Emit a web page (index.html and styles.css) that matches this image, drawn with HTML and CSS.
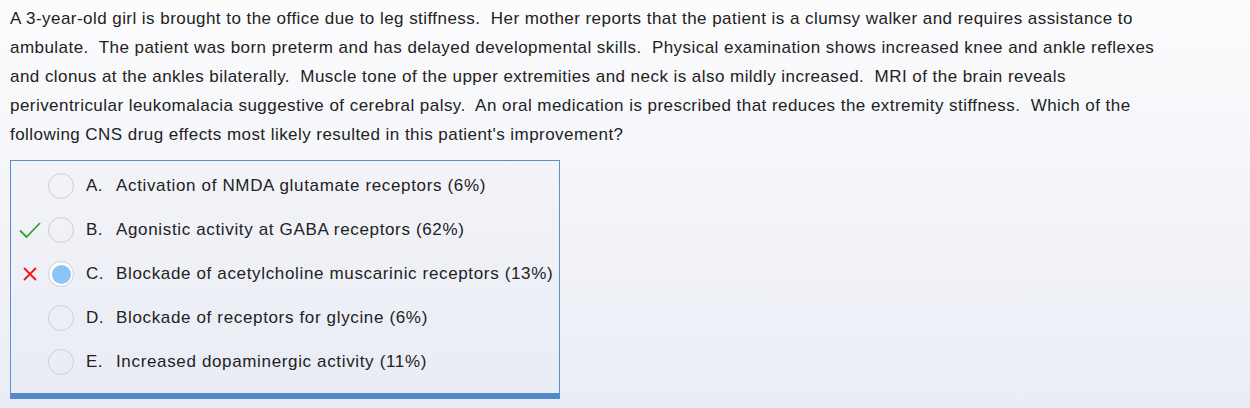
FILE: index.html
```html
<!DOCTYPE html>
<html>
<head>
<meta charset="utf-8">
<link rel="stylesheet" href="styles.css">
</head>
<body>
<div class="page">
  <p class="stem">A 3-year-old girl is brought to the office due to leg stiffness.&nbsp; Her mother reports that the patient is a clumsy walker and requires assistance to ambulate.&nbsp; The patient was born preterm and has delayed developmental skills.&nbsp; Physical examination shows increased knee and ankle reflexes and clonus at the ankles bilaterally.&nbsp; Muscle tone of the upper extremities and neck is also mildly increased.&nbsp; MRI of the brain reveals periventricular leukomalacia suggestive of cerebral palsy.&nbsp; An oral medication is prescribed that reduces the extremity stiffness.&nbsp; Which of the following CNS drug effects most likely resulted in this patient's improvement?</p>
  <div class="choices">
    <div class="choice">
      <span class="mark"></span>
      <span class="radio"></span>
      <span class="letter">A.</span>
      <span class="label">Activation of NMDA glutamate receptors (6%)</span>
    </div>
    <div class="choice">
      <span class="mark"><svg width="24" height="18" viewBox="0 0 24 18"><path d="M2 9.5 L8.5 16 L22 2" fill="none" stroke="#2aa52a" stroke-width="1.8"/></svg></span>
      <span class="radio"></span>
      <span class="letter">B.</span>
      <span class="label">Agonistic activity at GABA receptors (62%)</span>
    </div>
    <div class="choice">
      <span class="mark"><svg width="16" height="16" viewBox="0 0 16 16"><path d="M2 2 L14 14 M14 2 L2 14" fill="none" stroke="#f01414" stroke-width="1.8"/></svg></span>
      <span class="radio selected"></span>
      <span class="letter">C.</span>
      <span class="label">Blockade of acetylcholine muscarinic receptors (13%)</span>
    </div>
    <div class="choice">
      <span class="mark"></span>
      <span class="radio"></span>
      <span class="letter">D.</span>
      <span class="label">Blockade of receptors for glycine (6%)</span>
    </div>
    <div class="choice">
      <span class="mark"></span>
      <span class="radio"></span>
      <span class="letter">E.</span>
      <span class="label">Increased dopaminergic activity (11%)</span>
    </div>
  </div>
</div>
</body>
</html>
```
FILE: styles.css
```css
html, body {
  margin: 0;
  padding: 0;
}
body {
  width: 1250px;
  height: 408px;
  overflow: hidden;
  background: linear-gradient(to bottom, #fcfcfd 0%, #eaedf5 100%);
  font-family: Arial, "Liberation Sans", sans-serif;
  color: #222;
}
.page {
  padding: 4px 10px 0 10px;
}
.stem {
  margin: 0;
  font-size: 17px;
  letter-spacing: 0.45px;
  line-height: 29px;
  width: 1160px;
}
.choices {
  margin-top: 11px;
  width: 548px;
  border: 1px solid #5a8fd2;
  border-bottom: 6px solid #5289c9;
  background: linear-gradient(to bottom, #f3f4f8 0%, #e9ecf5 100%);
  padding: 3px 0 9px 0;
  box-sizing: content-box;
}
.choice {
  display: flex;
  align-items: center;
  height: 44px;
  font-size: 17px;
  letter-spacing: 0.65px;
}
.mark {
  width: 37px;
  display: flex;
  justify-content: center;
  align-items: center;
}
.radio {
  width: 24px;
  height: 24px;
  border: 1.5px solid #cfcfd2;
  border-radius: 50%;
  background: transparent;
  box-sizing: content-box;
  position: relative;
}
.radio.selected {
  background: #ffffff;
}
.radio.selected::after {
  content: "";
  position: absolute;
  left: 2.5px;
  top: 2.5px;
  width: 19px;
  height: 19px;
  border-radius: 50%;
  background: #8cc4f6;
}
.letter {
  margin-left: 12px;
  width: 30px;
  letter-spacing: 0.5px;
}
.label {
  white-space: nowrap;
}
```
